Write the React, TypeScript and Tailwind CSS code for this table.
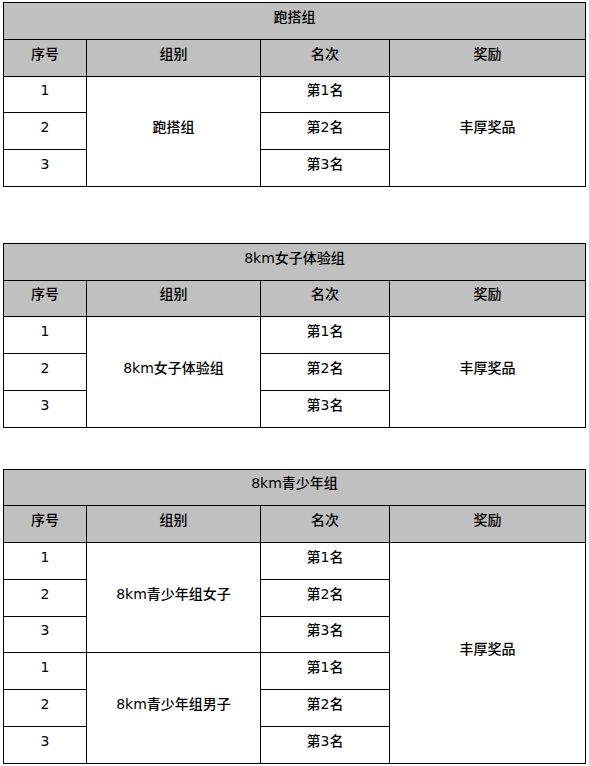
import React from "react";

type Group = { name: string; rows: number };

type Section = {
  title: string;
  groups: Group[];
  gapClass: string;
};

const SECTIONS: Section[] = [
  { title: "跑搭组", groups: [{ name: "跑搭组", rows: 3 }], gapClass: "mt-[2px]" },
  { title: "8km女子体验组", groups: [{ name: "8km女子体验组", rows: 3 }], gapClass: "mt-[56px]" },
  {
    title: "8km青少年组",
    groups: [
      { name: "8km青少年组女子", rows: 3 },
      { name: "8km青少年组男子", rows: 3 },
    ],
    gapClass: "mt-[41px]",
  },
];

const cell = "border border-black text-center align-middle p-0 pb-[8px] leading-[20px]";

function PrizeTable({ section }: { section: Section }) {
  const total = section.groups.reduce((n, g) => n + g.rows, 0);

  return (
    <table className={`${section.gapClass} ml-[3px] w-[583px] table-fixed border-collapse`}>
      <colgroup>
        <col className="w-[83px]" />
        <col className="w-[174px]" />
        <col className="w-[129px]" />
        <col className="w-[196px]" />
      </colgroup>
      <tbody>
        <tr className="h-[36.75px] bg-[#c0c0c0]">
          <td colSpan={4} className={cell}>
            {section.title}
          </td>
        </tr>
        <tr className="h-[36.75px] bg-[#c0c0c0]">
          <td className={cell}>序号</td>
          <td className={cell}>组别</td>
          <td className={cell}>名次</td>
          <td className={cell}>奖励</td>
        </tr>
        {section.groups.map((g, gi) =>
          Array.from({ length: g.rows }).map((_, i) => (
            <tr key={`${gi}-${i}`} className="h-[36.75px] bg-white">
              <td className={cell}>{i + 1}</td>
              {i === 0 && (
                <td rowSpan={g.rows} className={cell}>
                  {g.name}
                </td>
              )}
              <td className={cell}>第{i + 1}名</td>
              {gi === 0 && i === 0 && (
                <td rowSpan={total} className={cell}>
                  丰厚奖品
                </td>
              )}
            </tr>
          ))
        )}
      </tbody>
    </table>
  );
}

export default function App() {
  return (
    <div
      className="w-[589px] min-h-[766px] bg-white text-[14px] font-medium text-black"
      style={{ fontFamily: '"DejaVu Sans", "Noto Sans CJK SC", sans-serif' }}
    >
      {SECTIONS.map((s) => (
        <PrizeTable key={s.title} section={s} />
      ))}
    </div>
  );
}
